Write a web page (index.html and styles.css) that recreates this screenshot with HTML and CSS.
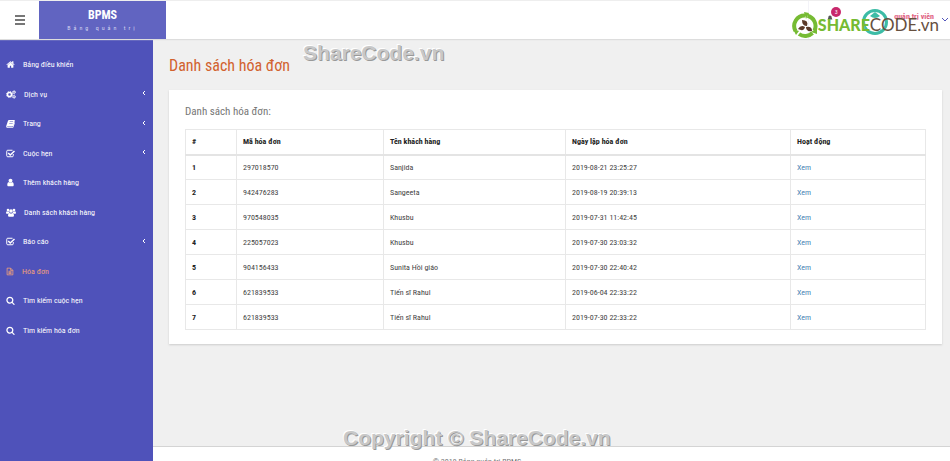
FILE: index.html
```html
<!DOCTYPE html>
<html lang="vi">
<head>
    <meta charset="UTF-8">
    <meta name="viewport" content="width=device-width, initial-scale=1.0">
    <title>BPMS - Danh sách hóa đơn</title>
    <link rel="stylesheet" href="styles.css">
</head>
<body>
    <svg class="sprite" aria-hidden="true">
        <symbol id="home" viewBox="0 0 1792 1792"><path d="M1472 992v480q0 26-19 45t-45 19h-384v-384h-256v384h-384q-26 0-45-19t-19-45v-480q0-1 .5-3t.5-3l575-474 575 474q1 2 1 6zm223-69l-62 74q-8 9-21 11h-3q-13 0-21-7l-692-577-692 577q-12 8-24 7-13-2-21-11l-62-74q-8-10-7-23.5t11-21.5l719-599q32-26 76-26t76 26l244 204v-195q0-14 9-23t23-9h192q14 0 23 9t9 23v408l219 182q10 8 11 21.5t-7 23.5z"/></symbol>
        <symbol id="cogs" viewBox="0 0 20 18">
            <g fill="none" stroke="currentColor">
                <circle cx="7" cy="9" r="4" stroke-width="3"/>
                <circle cx="7" cy="9" r="6" stroke-width="2" stroke-dasharray="2.4 2.3"/>
                <circle cx="16" cy="4.500" r="2.200" stroke-width="1.800"/>
                <circle cx="16" cy="4.500" r="3.400" stroke-width="1.200" stroke-dasharray="1.6 1.9"/>
                <circle cx="16" cy="13.500" r="2.200" stroke-width="1.800"/>
                <circle cx="16" cy="13.500" r="3.400" stroke-width="1.200" stroke-dasharray="1.6 1.9"/>
            </g>
        </symbol>
        <symbol id="book" viewBox="0 0 18 18"><path fill-rule="evenodd" d="M6 2h10.500q1.500.3 1 2l-3 9.500q-.5 1.500-2 1.500H3q-1 0-1 .5t1 .8h10.500l3.500-10q1 .7.7 1.700L15 16q-.6 1.800-2.300 1.800H3Q.2 17.500.3 14.500L4 3.500Q4.500 2 6 2zm1.500 3l-.4 1.200h7l.4-1.200zm-.9 2.800L6.200 9h7l.4-1.200z"/></symbol>
        <symbol id="check" viewBox="0 0 18 18"><path fill="none" stroke="currentColor" stroke-width="2" d="M14.500 10v3.500q0 2-2 2h-9q-2 0-2-2v-9q0-2 2-2h9.500"/><path fill="none" stroke="currentColor" stroke-width="3" d="M4.500 8l4 4L17 4"/></symbol>
        <symbol id="user" viewBox="0 0 1792 1792"><path d="M1536 1399q0 109-62.500 187t-150.500 78h-854q-88 0-150.500-78t-62.500-187q0-85 8.500-160.500t31.500-152 58.500-131 94-89 134.500-34.500q131 128 313 128t313-128q76 0 134.500 34.500t94 89 58.500 131 31.500 152 8.500 160.500zm-256-887q0 159-112.500 271.500t-271.500 112.500-271.500-112.500-112.500-271.500 112.500-271.500 271.500-112.500 271.500 112.500 112.500 271.500z"/></symbol>
        <symbol id="users" viewBox="0 0 20 18">
            <circle cx="4" cy="4" r="2.600"/><circle cx="16" cy="4" r="2.600"/><circle cx="10" cy="6" r="3.600"/>
            <path d="M0 10q0-3.500 2-3.500 1.500 1 4 .6Q6 9 7 10q-2 0-3 1.500H1.500Q0 11.500 0 10zM20 10q0-3.500-2-3.500-1.500 1-4 .6 0 1.900-1 2.900 2 0 3 1.500h2.500q1.500 0 1.500-1.500zM4 15q0-5 3-5 3 2 6 0 3 0 3 5 0 2.500-2.500 2.500h-7Q4 17.500 4 15z"/>
        </symbol>
        <symbol id="file" viewBox="0 0 18 18"><path fill="none" stroke="currentColor" stroke-width="1.800" d="M2.500 1.500h8l5 5v10h-13zM10.500 1.500v5h5M5.500 8.500h7M5.500 11h7M5.500 13.500h7"/></symbol>
        <symbol id="search" viewBox="0 0 1792 1792"><path d="M1216 832q0-185-131.500-316.500t-316.500-131.500-316.500 131.500-131.500 316.500 131.500 316.500 316.500 131.500 316.500-131.500 131.500-316.500zm512 832q0 52-38 90t-90 38q-54 0-90-38l-343-342q-179 124-399 124-143 0-273.500-55.500t-225-150-150-225-55.500-273.500 55.500-273.500 150-225 225-150 273.500-55.500 273.500 55.500 225 150 150 225 55.500 273.500q0 220-124 399l343 343q37 37 37 90z"/></symbol>
        <symbol id="angle" viewBox="0 0 4 6"><path fill="none" stroke="currentColor" d="M3 1L1 3l2 2"/></symbol>
    </svg>

    <header class="header">
        <button class="menu-toggle" aria-label="Menu"><span></span><span></span><span></span></button>
        <a class="logo" href="#">
            <strong>BPMS</strong>
            <small>Bảng quản trị</small>
        </a>
        <div class="header-right">
            <button class="bell" aria-label="Thông báo">
                <svg viewBox="0 0 10 10"><path d="M5 1q3 0 3 4l1 2.500H1L2 5q0-4 3-4z"/></svg>
                <span class="badge">3</span>
            </button>
            <a class="profile" href="#">
                <svg class="avatar" viewBox="0 0 30 30"><circle cx="15" cy="15" r="11.500"/><path d="M15 5l5 4q-5 4-10 0z"/></svg>
                <span class="profile-name">quản trị viên</span>
                <svg class="chevron" viewBox="0 0 8 6"><path d="M1 1l3 3 3-3"/></svg>
            </a>
        </div>
        <div class="brand">
            <svg class="brand-mark" viewBox="0 0 26 28">
                <path class="ring" d="M3.500 20A10.500 10.500 0 0 1 13 4.500"/>
                <path class="ring" d="M15.500 4.800A10.500 10.500 0 0 1 22.500 19.500"/>
                <path class="ring" d="M20.500 22A10.500 10.500 0 0 1 7 23"/>
                <path class="ring-tip" d="M12 1l5 1-3 6zM25 17v6l-6-2zM1 18l6 2-3 4z"/>
                <path class="leaf" d="M10 9q7 0 5 6-5 0-5-6zM6 18q3-5 7-2-1 5-7 2zM14 16q6-1 6 4-6 1-6-4z"/>
            </svg>
            <span class="brand-share">SHARE</span><span class="brand-code">CODE.vn</span>
        </div>
    </header>

    <div class="layout">
        <nav class="sidebar">
            <ul>
                <li><a href="#"><svg><use href="#home"/></svg>Bảng điều khiển</a></li>
                <li><a href="#"><svg class="wide"><use href="#cogs"/></svg>Dịch vụ<svg class="angle"><use href="#angle"/></svg></a></li>
                <li><a href="#"><svg><use href="#book"/></svg>Trang<svg class="angle"><use href="#angle"/></svg></a></li>
                <li><a href="#"><svg><use href="#check"/></svg>Cuộc hẹn<svg class="angle"><use href="#angle"/></svg></a></li>
                <li><a href="#"><svg><use href="#user"/></svg>Thêm khách hàng</a></li>
                <li><a href="#"><svg class="wide"><use href="#users"/></svg>Danh sách khách hàng</a></li>
                <li><a href="#"><svg><use href="#check"/></svg>Báo cáo<svg class="angle"><use href="#angle"/></svg></a></li>
                <li><a class="active" href="#"><svg class="narrow"><use href="#file"/></svg>Hóa đơn</a></li>
                <li><a href="#"><svg><use href="#search"/></svg>Tìm kiếm cuộc hẹn</a></li>
                <li><a href="#"><svg><use href="#search"/></svg>Tìm kiếm hóa đơn</a></li>
            </ul>
        </nav>

        <div class="page">
            <main class="content">
                <h1>Danh sách hóa đơn</h1>
                <section class="panel">
                    <h2>Danh sách hóa đơn:</h2>
                    <table>
                        <colgroup>
                            <col class="col-no"><col class="col-id"><col class="col-name"><col class="col-date"><col class="col-action">
                        </colgroup>
                        <thead>
                            <tr><th>#</th><th>Mã hóa đơn</th><th>Tên khách hàng</th><th>Ngày lập hóa đơn</th><th>Hoạt động</th></tr>
                        </thead>
                        <tbody>
                            <tr><th>1</th><td>297018570</td><td>Sanjida</td><td>2019-08-21 23:25:27</td><td><a href="#">Xem</a></td></tr>
                            <tr><th>2</th><td>942476283</td><td>Sangeeta</td><td>2019-08-19 20:39:13</td><td><a href="#">Xem</a></td></tr>
                            <tr><th>3</th><td>970548035</td><td>Khusbu</td><td>2019-07-31 11:42:45</td><td><a href="#">Xem</a></td></tr>
                            <tr><th>4</th><td>225057023</td><td>Khusbu</td><td>2019-07-30 23:03:32</td><td><a href="#">Xem</a></td></tr>
                            <tr><th>5</th><td>904156433</td><td>Sunita Hồi giáo</td><td>2019-07-30 22:40:42</td><td><a href="#">Xem</a></td></tr>
                            <tr><th>6</th><td>621839533</td><td>Tiến sĩ Rahul</td><td>2019-06-04 22:33:22</td><td><a href="#">Xem</a></td></tr>
                            <tr><th>7</th><td>621839533</td><td>Tiến sĩ Rahul</td><td>2019-07-30 22:33:22</td><td><a href="#">Xem</a></td></tr>
                        </tbody>
                    </table>
                </section>
            </main>
            <footer class="footer">© 2019 Bảng quản trị BPMS</footer>
        </div>
    </div>

    <div class="watermark watermark-top">ShareCode.vn</div>
    <div class="watermark watermark-bottom">Copyright © ShareCode.vn</div>
</body>
</html>
```
FILE: styles.css
```css
* {
    box-sizing: border-box;
}
body {
    margin: 0;
    height: 100vh;
    overflow: hidden;
    display: flex;
    flex-direction: column;
    font-family: 'Roboto Condensed', 'Roboto', sans-serif;
    font-size: 8px;
    color: #444;
    background: #f0f0f0;
}
a {
    color: inherit;
    text-decoration: none;
}
button {
    border: none;
    padding: 0;
    background: none;
    font-family: inherit;
    cursor: pointer;
}
.sprite {
    position: absolute;
    width: 0;
    height: 0;
}

/* header */
.header {
    position: relative;
    z-index: 1;
    display: flex;
    height: 39px;
    flex-shrink: 0;
    background: #fff;
    border-top: 1px solid #eee;
    box-shadow: 0 1px 1px #ddd;
}
.menu-toggle {
    width: 39px;
    display: flex;
    flex-direction: column;
    align-items: center;
    justify-content: center;
    gap: 2px;
}
.menu-toggle span {
    width: 10px;
    height: 2px;
    background: #777;
}
.logo {
    width: 127px;
    padding-top: 7px;
    text-align: center;
    color: #fff;
    background: #6164c1;
}
.logo strong,
.logo small {
    display: block;
}
.logo strong {
    font-size: 12px;
    line-height: 14px;
}
.logo small {
    font-size: 6px;
    line-height: 12px;
    letter-spacing: 3px;
    color: #d4d5f0;
}
.header-right {
    flex: 1;
    display: flex;
    justify-content: flex-end;
}
.bell {
    position: relative;
    width: 42px;
    border-left: 1px solid #f3f3f8;
}
.bell svg {
    width: 6px;
    height: 6px;
    margin-bottom: 4px;
    fill: #555;
}
.badge {
    position: absolute;
    top: 6px;
    left: 22px;
    width: 10px;
    height: 10px;
    border-radius: 50%;
    background: #c8286c;
    color: #fff;
    font-size: 6px;
    line-height: 10px;
}
.profile {
    display: flex;
    align-items: center;
    padding-right: 1px;
}
.avatar {
    width: 30px;
    height: 30px;
    margin: 4px 4px 0 10px;
}
.avatar circle {
    fill: none;
    stroke: #3cbca6;
    stroke-width: 3;
}
.avatar path {
    fill: #3cbca6;
}
.profile-name {
    margin-bottom: 8px;
    font-size: 8px;
    font-weight: bold;
    color: #e0607f;
}
.chevron {
    width: 8px;
    height: 6px;
    margin-left: 7px;
    fill: none;
    stroke: #5356bc;
}
.brand {
    position: absolute;
    top: 10px;
    right: 11px;
    display: flex;
    align-items: center;
    font-family: 'Lato', sans-serif;
    font-size: 16px;
    line-height: 28px;
}
.brand-mark {
    width: 26px;
    height: 28px;
}
.ring {
    fill: none;
    stroke: #76bb33;
    stroke-width: 4;
}
.ring-tip {
    fill: #76bb33;
}
.leaf {
    fill: #5b3a29;
}
.brand-share {
    font-weight: 900;
    color: #76bb33;
}
.brand-code {
    font-size: 17px;
    color: #66503f;
}

/* sidebar */
.layout {
    flex: 1;
    min-height: 0;
    display: flex;
}
.sidebar {
    width: 153px;
    flex-shrink: 0;
    padding-top: 11px;
    background: #4f52ba;
    color: #fff;
}
.sidebar ul {
    display: grid;
    grid-auto-rows: 1fr;
    height: 295px;
    margin: 0;
    padding: 0;
    list-style: none;
}
.sidebar a {
    display: flex;
    align-items: center;
    height: 100%;
    padding: 0 7px 0 6px;
}
.sidebar svg {
    width: 9px;
    height: 9px;
    margin-right: 8px;
    fill: currentColor;
}
.sidebar .wide {
    width: 10px;
}
.sidebar .narrow {
    width: 8px;
}
.sidebar .angle {
    width: 4px;
    height: 6px;
    margin: 0 0 2px auto;
}
.sidebar .active {
    color: #f2a179;
}

/* content */
.page {
    flex: 1;
    display: flex;
    flex-direction: column;
}
.content {
    flex: 1;
    padding: 16px 8px 0 16px;
}
h1 {
    margin: 0 0 13px;
    font-size: 16px;
    line-height: 22px;
    font-weight: normal;
    color: #d2622f;
}
.panel {
    padding: 14px 16px;
    background: #fff;
    box-shadow: 0 1px 2px #ccc;
}
h2 {
    margin: 0 0 9px;
    font-size: 11px;
    line-height: 16px;
    font-weight: normal;
    color: #777;
}
table {
    width: 100%;
    table-layout: fixed;
    border-collapse: collapse;
}
th,
td {
    height: 25px;
    padding: 0 6px;
    border: 1px solid #e8e8e8;
    text-align: left;
}
th {
    color: #222;
}
thead th {
    border-bottom: 2px solid #e4e4e4;
}
td a {
    color: #4a84b5;
}
.col-no {
    width: 51px;
}
.col-id {
    width: 147px;
}
.col-name {
    width: 182px;
}
.col-date {
    width: 225px;
}
.col-action {
    width: 135px;
}
.footer {
    height: 15px;
    padding: 10px 149px 0 0;
    border-top: 1px solid #d4d4d4;
    background: #fff;
    color: #777;
    line-height: 10px;
    text-align: center;
}

/* watermarks */
.watermark {
    position: absolute;
    z-index: 2;
    font-family: 'Liberation Sans', sans-serif;
    font-size: 21px;
    font-weight: bold;
    line-height: 24px;
    color: #c8c8c8;
    text-shadow: 1px 1px 0 #999, -1px -1px 0 #fff;
    pointer-events: none;
}
.watermark-top {
    top: 41px;
    left: 303px;
}
.watermark-bottom {
    top: 426px;
    left: 343px;
}
```
